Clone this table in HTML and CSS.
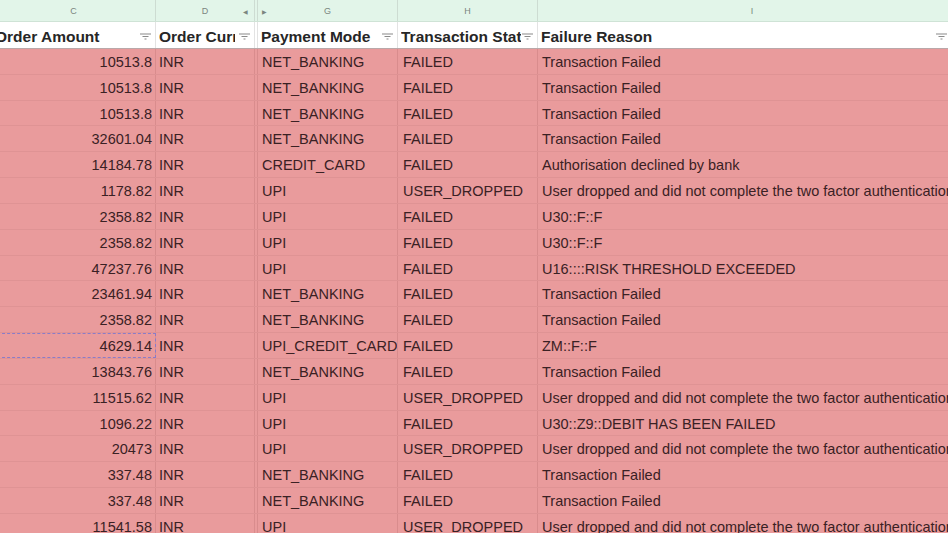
FILE: index.html
```html
<!DOCTYPE html>
<html>
<head>
<meta charset="utf-8">
<link rel="stylesheet" href="styles.css">
</head>
<body>
<div class="sheet">
  <div class="row letters">
    <div class="cell cc">C</div>
    <div class="cell cd">D<span class="arr l">&#9664;</span></div>
    <div class="gap"></div>
    <div class="cell cg"><span class="arr r">&#9654;</span>G</div>
    <div class="cell ch">H</div>
    <div class="cell ci">I</div>
  </div>
  <div class="row head">
    <div class="cell cc"><span class="t">Order Amount</span><svg class="flt" width="11" height="7" viewBox="0 0 11 7"><path d="M0 1h11M2.5 3.5h6M4.5 6h2" stroke="#8a8a8a" stroke-width="1.2"/></svg></div>
    <div class="cell cd"><span class="t">Order Currency</span><svg class="flt" width="11" height="7" viewBox="0 0 11 7"><path d="M0 1h11M2.5 3.5h6M4.5 6h2" stroke="#8a8a8a" stroke-width="1.2"/></svg></div>
    <div class="gap"></div>
    <div class="cell cg"><span class="t">Payment Mode</span><svg class="flt" width="11" height="7" viewBox="0 0 11 7"><path d="M0 1h11M2.5 3.5h6M4.5 6h2" stroke="#8a8a8a" stroke-width="1.2"/></svg></div>
    <div class="cell ch"><span class="t">Transaction Status</span><svg class="flt" width="11" height="7" viewBox="0 0 11 7"><path d="M0 1h11M2.5 3.5h6M4.5 6h2" stroke="#8a8a8a" stroke-width="1.2"/></svg></div>
    <div class="cell ci"><span class="t">Failure Reason</span><svg class="flt" width="11" height="7" viewBox="0 0 11 7"><path d="M0 1h11M2.5 3.5h6M4.5 6h2" stroke="#8a8a8a" stroke-width="1.2"/></svg></div>
  </div>

  <div class="row data"><div class="cell cc">10513.8</div><div class="cell cd">INR</div><div class="gap"></div><div class="cell cg">NET_BANKING</div><div class="cell ch">FAILED</div><div class="cell ci">Transaction Failed</div></div>
  <div class="row data"><div class="cell cc">10513.8</div><div class="cell cd">INR</div><div class="gap"></div><div class="cell cg">NET_BANKING</div><div class="cell ch">FAILED</div><div class="cell ci">Transaction Failed</div></div>
  <div class="row data"><div class="cell cc">10513.8</div><div class="cell cd">INR</div><div class="gap"></div><div class="cell cg">NET_BANKING</div><div class="cell ch">FAILED</div><div class="cell ci">Transaction Failed</div></div>
  <div class="row data"><div class="cell cc">32601.04</div><div class="cell cd">INR</div><div class="gap"></div><div class="cell cg">NET_BANKING</div><div class="cell ch">FAILED</div><div class="cell ci">Transaction Failed</div></div>
  <div class="row data"><div class="cell cc">14184.78</div><div class="cell cd">INR</div><div class="gap"></div><div class="cell cg">CREDIT_CARD</div><div class="cell ch">FAILED</div><div class="cell ci">Authorisation declined by bank</div></div>
  <div class="row data"><div class="cell cc">1178.82</div><div class="cell cd">INR</div><div class="gap"></div><div class="cell cg">UPI</div><div class="cell ch">USER_DROPPED</div><div class="cell ci">User dropped and did not complete the two factor authentication</div></div>
  <div class="row data"><div class="cell cc">2358.82</div><div class="cell cd">INR</div><div class="gap"></div><div class="cell cg">UPI</div><div class="cell ch">FAILED</div><div class="cell ci">U30::F::F</div></div>
  <div class="row data"><div class="cell cc">2358.82</div><div class="cell cd">INR</div><div class="gap"></div><div class="cell cg">UPI</div><div class="cell ch">FAILED</div><div class="cell ci">U30::F::F</div></div>
  <div class="row data"><div class="cell cc">47237.76</div><div class="cell cd">INR</div><div class="gap"></div><div class="cell cg">UPI</div><div class="cell ch">FAILED</div><div class="cell ci">U16::::RISK THRESHOLD EXCEEDED</div></div>
  <div class="row data"><div class="cell cc">23461.94</div><div class="cell cd">INR</div><div class="gap"></div><div class="cell cg">NET_BANKING</div><div class="cell ch">FAILED</div><div class="cell ci">Transaction Failed</div></div>
  <div class="row data"><div class="cell cc">2358.82</div><div class="cell cd">INR</div><div class="gap"></div><div class="cell cg">NET_BANKING</div><div class="cell ch">FAILED</div><div class="cell ci">Transaction Failed</div></div>
  <div class="row data"><div class="cell cc sel">4629.14</div><div class="cell cd">INR</div><div class="gap"></div><div class="cell cg">UPI_CREDIT_CARD</div><div class="cell ch">FAILED</div><div class="cell ci">ZM::F::F</div></div>
  <div class="row data"><div class="cell cc">13843.76</div><div class="cell cd">INR</div><div class="gap"></div><div class="cell cg">NET_BANKING</div><div class="cell ch">FAILED</div><div class="cell ci">Transaction Failed</div></div>
  <div class="row data"><div class="cell cc">11515.62</div><div class="cell cd">INR</div><div class="gap"></div><div class="cell cg">UPI</div><div class="cell ch">USER_DROPPED</div><div class="cell ci">User dropped and did not complete the two factor authentication</div></div>
  <div class="row data"><div class="cell cc">1096.22</div><div class="cell cd">INR</div><div class="gap"></div><div class="cell cg">UPI</div><div class="cell ch">FAILED</div><div class="cell ci">U30::Z9::DEBIT HAS BEEN FAILED</div></div>
  <div class="row data"><div class="cell cc">20473</div><div class="cell cd">INR</div><div class="gap"></div><div class="cell cg">UPI</div><div class="cell ch">USER_DROPPED</div><div class="cell ci">User dropped and did not complete the two factor authentication</div></div>
  <div class="row data"><div class="cell cc">337.48</div><div class="cell cd">INR</div><div class="gap"></div><div class="cell cg">NET_BANKING</div><div class="cell ch">FAILED</div><div class="cell ci">Transaction Failed</div></div>
  <div class="row data"><div class="cell cc">337.48</div><div class="cell cd">INR</div><div class="gap"></div><div class="cell cg">NET_BANKING</div><div class="cell ch">FAILED</div><div class="cell ci">Transaction Failed</div></div>
  <div class="row data"><div class="cell cc">11541.58</div><div class="cell cd">INR</div><div class="gap"></div><div class="cell cg">UPI</div><div class="cell ch">USER_DROPPED</div><div class="cell ci">User dropped and did not complete the two factor authentication</div></div>
</div>
</body>
</html>
```
FILE: styles.css
```css
html, body {
  margin: 0;
  padding: 0;
  overflow: hidden;
  background: #e99b9c;
}
body {
  width: 948px;
  height: 533px;
  font-family: "Liberation Sans", Arial, sans-serif;
}
.sheet {
  margin-left: -8px;
  width: 975px;
  display: flex;
  flex-direction: column;
}
.row {
  display: flex;
  flex: none;
  box-sizing: border-box;
}
.cell {
  box-sizing: border-box;
  overflow: hidden;
  white-space: nowrap;
  border-right: 1px solid #d98c8d;
  display: flex;
  align-items: center;
}
.gap {
  width: 2px;
  flex: none;
  border-right: 1px solid #d98c8d;
}
.cc { width: 164px; flex: none; }
.cd { width: 99px; flex: none; }
.cg { width: 140px; flex: none; }
.ch { width: 140px; flex: none; }
.ci { flex: 1; border-right: none; }

/* column letters */
.letters {
  height: 22px;
  background: #e2f5e9;
  border-bottom: 1px solid #cfe3d6;
}
.letters .cell {
  justify-content: center;
  font-size: 9px;
  color: #7b857f;
  border-right: 1px solid #cddcd2;
}
.letters .gap { border-right: 1px solid #cddcd2; }
.letters .cd { position: relative; }
.arr {
  font-size: 6px;
  color: #7b857f;
}
.arr.l { position: absolute; right: 6px; top: 8px; }
.letters .cg { position: relative; }
.arr.r { position: absolute; left: 4px; top: 8px; }

/* header row */
.head {
  height: 27px;
  background: #ffffff;
  border-bottom: 1px solid #b9a8a9;
}
.head .cell {
  font-weight: bold;
  font-size: 15.5px;
  color: #262626;
  padding-left: 3px;
  padding-right: 4px;
  padding-top: 3px;
  border-right: 1px solid #e3e3e3;
  justify-content: space-between;
}
.head .gap { border-right: 1px solid #e3e3e3; }
.head .t {
  overflow: hidden;
  flex: 1;
  min-width: 0;
}
.head .cd .t { flex: none; width: 76px; }
.flt { flex: none; margin-left: 1px; }
.head .ci .flt { margin-right: 15px; }

/* data rows */
.data {
  height: 25.84px;
  border-bottom: 1px solid #df9394;
}
.data .cell {
  font-size: 14.5px;
  color: #3a2124;
  padding-left: 4px;
  padding-top: 1px;
}
.data .cc {
  justify-content: flex-end;
  padding-right: 3px;
  padding-left: 0;
}
.data .cg { padding-left: 4px; }
.data .cd { padding-left: 3px; }
.data .ch { padding-left: 5px; }
.data .sel {
  outline: 1px dashed #8a7cc8;
  outline-offset: -1px;
}
```
